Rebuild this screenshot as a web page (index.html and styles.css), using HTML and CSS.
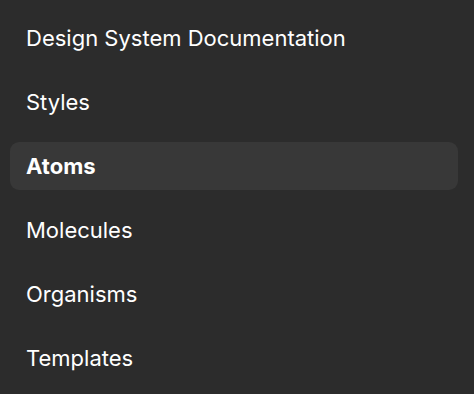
FILE: index.html
```html
<!doctype html>
<html>
<head>
  <meta charset="utf8">
  <title>Design System Documentation</title>
  <link rel="stylesheet" href="styles.css">
</head>
<body>
  <nav class="sidebar">
    <a class="nav-item" href="#">Design System Documentation</a>
    <a class="nav-item" href="#">Styles</a>
    <a class="nav-item active" href="#">Atoms</a>
    <a class="nav-item" href="#">Molecules</a>
    <a class="nav-item" href="#">Organisms</a>
    <a class="nav-item" href="#">Templates</a>
  </nav>
</body>
</html>
```

FILE: styles.css
```css
html, body {
  width: 100%;
  height: 100%;
  margin: 0;
  padding: 0;
  overflow: hidden;
  background: #2c2c2c;
  font-family: Inter, 'Noto Sans', sans-serif;
}

.sidebar {
  display: flex;
  flex-direction: column;
  gap: 16px;
  padding: 14px 16px 0 10px;
}

.nav-item {
  display: flex;
  align-items: center;
  height: 48px;
  padding: 0 16px;
  border-radius: 9px;
  color: #ffffff;
  font-size: 22px;
  text-decoration: none;
}

.nav-item.active {
  background: #383838;
  font-weight: 700;
}
```
